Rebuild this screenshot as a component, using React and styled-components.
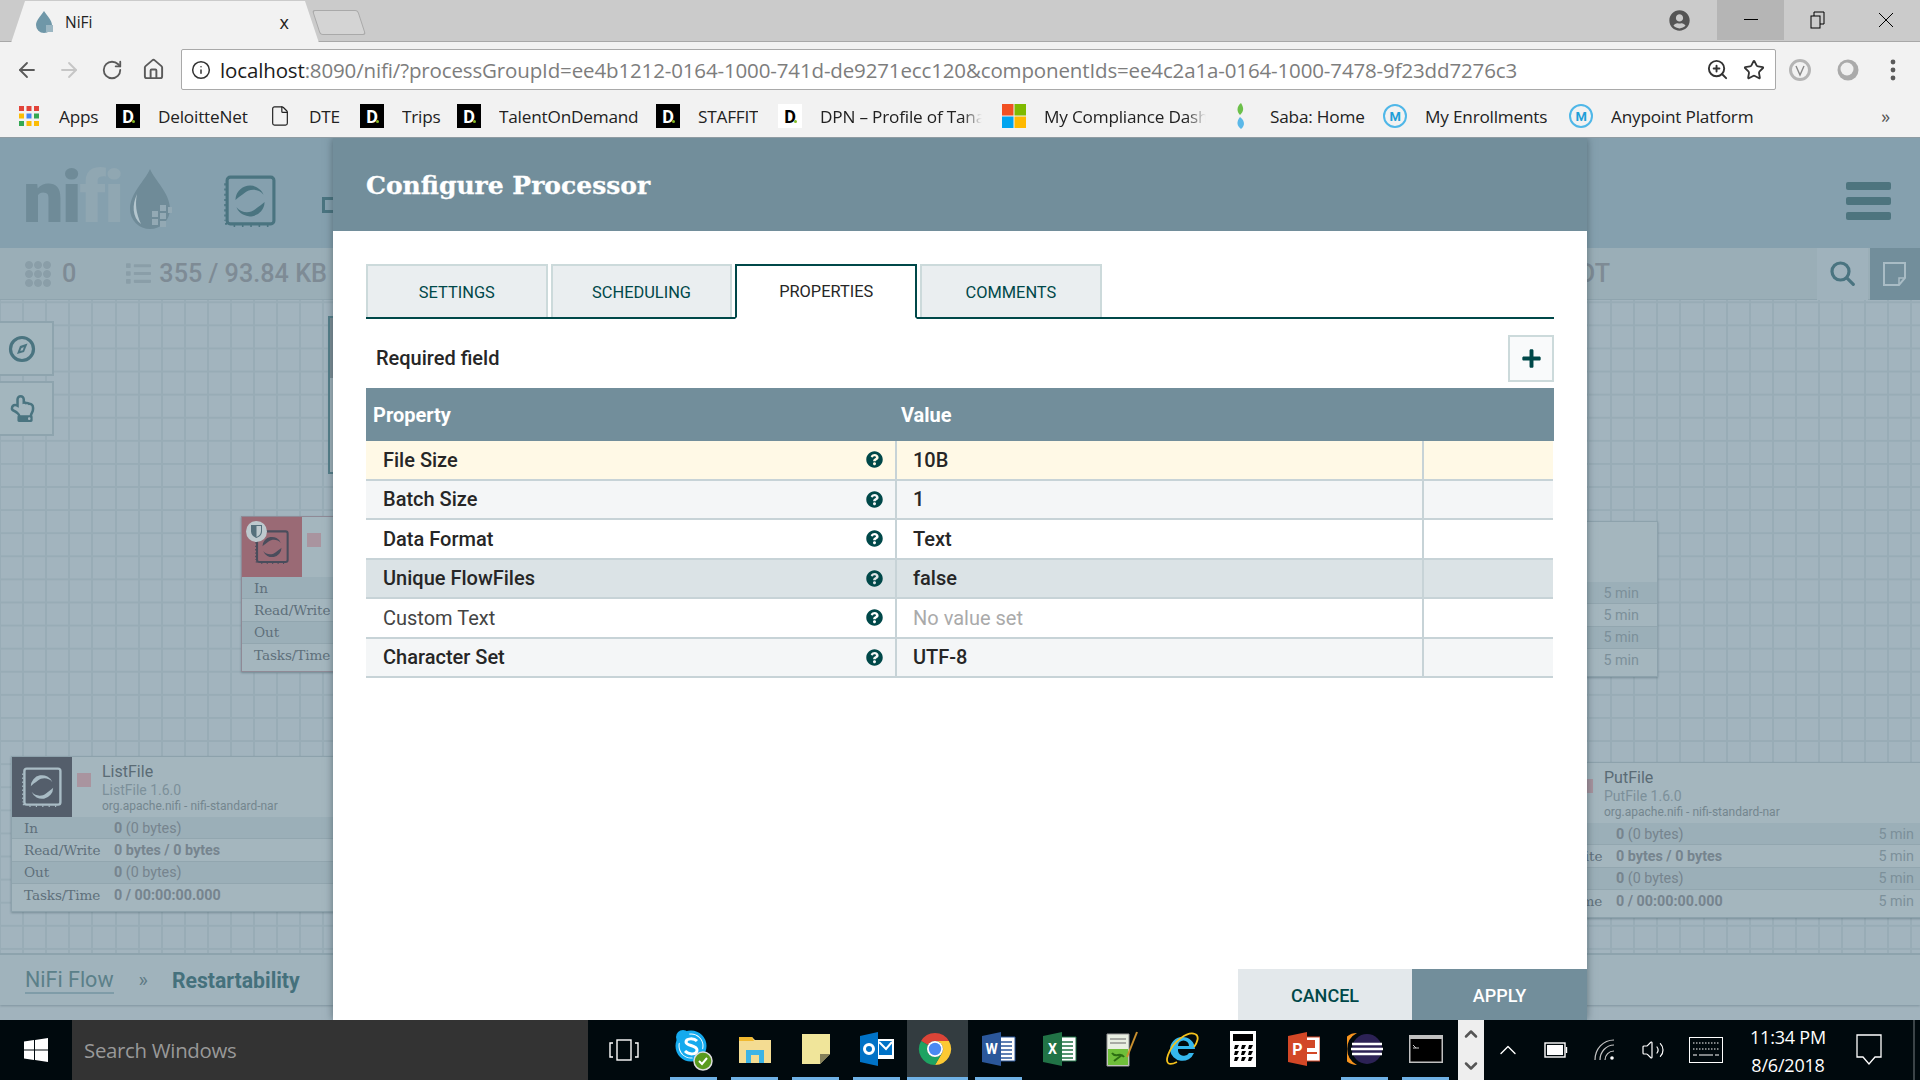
import React from 'react';
import styled, { createGlobalStyle } from 'styled-components';
import { ArrowLeft, ArrowRight, RotateCw, Home, Info, ZoomIn, Star, File, ChevronUp, ChevronDown, Volume2 } from 'lucide-react';
import { FaPlus, FaQuestionCircle, FaUserCircle, FaList, FaRegHandPointUp } from 'react-icons/fa';

const Global = createGlobalStyle`
  html, body { margin: 0; padding: 0; overflow: hidden; background: #000; }
  * { box-sizing: border-box; }
`;

const TEAL = '#004849';
const SLATE = '#728e9b';
const UI = '"Open Sans", "Noto Sans", sans-serif';
const ROBOTO = 'Roboto, "Liberation Sans", sans-serif';
const SLAB = '"DejaVu Serif", "Liberation Serif", serif';

const Screen = styled.div`
  width: 1920px;
  height: 1080px;
  display: flex;
  flex-direction: column;
  overflow: hidden;
  font-family: ${UI};
`;

/* browser chrome */
const TabStrip = styled.div`
  height: 42px;
  background: #cbcbcb;
  border-bottom: 1px solid #a8a8a8;
  display: flex;
  position: relative;
  flex: none;
`;
const BrowserTab = styled.div`
  width: 308px;
  height: 42px;
  margin: 1px 0 0 11px;
  background: #f2f2f2;
  clip-path: polygon(0 100%, 14px 0, 294px 0, 100% 100%);
  display: flex;
  align-items: center;
  padding-left: 24px;
  gap: 10px;
  font-size: 15.5px;
  color: #222;
`;
const TabTitle = styled.span`
  flex: 1;
`;
const TabClose = styled.span`
  font-size: 18px;
  margin-right: 30px;
  color: #222;
`;
const NewTab = styled.div`
  width: 46px;
  height: 25px;
  margin: 10px 0 0 -3px;
  background: #d4d4d4;
  border: 1px solid #a9a9a9;
  border-radius: 3px;
  transform: skewX(18deg);
`;
const WindowControls = styled.div`
  margin-left: auto;
  display: flex;
  align-items: center;
  height: 40px;
  color: #555;
`;
const Profile = styled.div`
  width: 35px;
  margin-right: 13px;
  display: flex;
`;
const WinBtn = styled.div`
  width: ${p => p.$w}px;
  height: 40px;
  display: flex;
  align-items: center;
  justify-content: center;
  background: ${p => (p.$hot ? '#b5b5b5' : 'transparent')};
`;
const Toolbar = styled.div`
  height: 53px;
  flex: none;
  background: #f2f2f2;
  display: flex;
  align-items: center;
  padding-top: 2px;
  color: #5a5a5a;
`;
const NavSlot = styled.div`
  width: ${p => p.$w}px;
  flex: none;
  display: flex;
  justify-content: center;
  color: ${p => p.$color || '#5a5a5a'};
`;
const Omnibox = styled.div`
  width: 1595px;
  height: 41px;
  margin-left: 15px;
  flex: none;
  background: #fff;
  border: 1px solid #a9a9a9;
  border-radius: 2px;
  display: flex;
  align-items: center;
  padding: 0 10px 0 9px;
  gap: 9px;
`;
const Url = styled.div`
  flex: 1;
  font-size: 20.5px;
  letter-spacing: -0.14px;
  color: #7d7d7d;
  white-space: nowrap;
  overflow: hidden;
  b { font-weight: 400; color: #1c1c1c; }
`;
const OmniAction = styled.span`
  display: flex;
  margin-right: ${p => p.$mr || 0}px;
  color: #333;
`;
const Bookmarks = styled.div`
  height: 43px;
  flex: none;
  background: #f2f2f2;
  border-bottom: 1px solid #8f9ca3;
  display: flex;
  align-items: center;
  padding-left: 17px;
  font-size: 17.2px;
  letter-spacing: -0.2px;
  color: #222;
`;
const Bookmark = styled.div`
  width: ${p => p.$w}px;
  display: flex;
  align-items: center;
  gap: 18px;
  flex: none;
`;
const BookmarkLabel = styled.span`
  white-space: nowrap;
  overflow: hidden;
  ${p => p.$clip && `
    width: ${p.$clip}px;
    -webkit-mask-image: linear-gradient(to right, #000 88%, transparent);
    mask-image: linear-gradient(to right, #000 88%, transparent);
  `}
`;
const More = styled.span`
  margin-left: auto;
  margin-right: 30px;
  font-size: 18px;
  color: #555;
`;
const DBadge = styled.span`
  width: 24px;
  height: 24px;
  flex: none;
  background: ${p => (p.$light ? '#fff' : '#000')};
  color: ${p => (p.$light ? '#000' : '#fff')};
  font: 700 18px ${ROBOTO};
  display: flex;
  align-items: center;
  justify-content: center;
  position: relative;
  &::after {
    content: '';
    position: absolute;
    width: 3px;
    height: 3px;
    right: 5px;
    bottom: 5px;
    border-radius: 50%;
    background: #86bc25;
  }
`;
const MuleBadge = styled.span`
  width: 24px;
  height: 24px;
  flex: none;
  border-radius: 50%;
  border: 2px solid #4fb7e8;
  color: #1f9fd8;
  font: 700 13px ${ROBOTO};
  display: flex;
  align-items: center;
  justify-content: center;
`;

/* nifi page behind the dialog */
const Page = styled.div`
  flex: 1;
  position: relative;
  display: flex;
  flex-direction: column;
  background: #a1b3bd;
  font-family: ${ROBOTO};
  overflow: hidden;
`;
const TopBar = styled.div`
  height: 110px;
  flex: none;
  background: #85a0ae;
  display: flex;
  align-items: flex-start;
  padding-left: 23px;
`;
const Logo = styled.div`
  display: flex;
  align-items: flex-start;
  margin-top: 31px;
`;
const LogoWord = styled.div`
  font: 900 72px/58px ${ROBOTO};
  letter-spacing: -1.8px;
  color: #6f8b98;
  span { color: #90a7b2; }
`;
const LogoDrop = styled.svg`
  width: 42px;
  height: 62px;
  margin: 0 0 0 8px;
`;
const ToolIcon = styled.div`
  margin: ${p => p.$m};
  display: flex;
`;
const Hamburger = styled.div`
  margin: 44px 29px 0 auto;
  width: 45px;
  display: flex;
  flex-direction: column;
  gap: 7px;
`;
const HamburgerBar = styled.span`
  height: 8px;
  border-radius: 2px;
  background: #4d747e;
`;
const StatsBar = styled.div`
  height: 52px;
  flex: none;
  background: #9aaeb7;
  border-bottom: 1px solid #8fa4ae;
  display: flex;
  align-items: center;
  padding-left: 25px;
  color: #7e8b95;
  font-weight: 500;
  font-size: 25.2px;
`;
const Stat = styled.span`
  margin-left: ${p => p.$ml || 0}px;
  margin-right: ${p => p.$mr || 0}px;
  display: flex;
`;
const StatsSpacer = styled.span`
  flex: 1;
`;
const StatsButton = styled.div`
  width: ${p => p.$w}px;
  height: 52px;
  margin-left: 2px;
  background: ${p => (p.$dark ? SLATE : '#9fb2bc')};
  display: flex;
  align-items: center;
  justify-content: center;
`;
const Canvas = styled.div`
  flex: 1;
  position: relative;
  --line: #98acb6;
  background-color: #a2b4be;
  background-image:
    repeating-linear-gradient(90deg, var(--line) 0 1px, transparent 1px 22.1px, var(--line) 22.1px 23.1px),
    repeating-linear-gradient(90deg, var(--line) 0 1px, transparent 1px 22.1px, var(--line) 22.1px 23.1px),
    linear-gradient(180deg, var(--line) 0 2px, transparent 2px);
  background-size: 333px 100%, 333px 100%, 100% 23.1px;
  background-position: 0 0, 1587.6px 0, 0 1.3px;
  background-repeat: no-repeat, no-repeat, repeat-y;
`;
const SideButton = styled.div`
  position: absolute;
  left: 0;
  top: ${p => p.$top}px;
  width: 54px;
  height: 55px;
  padding-right: 8px;
  background: #a3b6be;
  border: 2px solid #8ea4ae;
  border-left: 0;
  display: flex;
  align-items: center;
  justify-content: center;
  color: #4a7480;
`;
const GroupEdge = styled.div`
  position: absolute;
  left: 328px;
  top: 16px;
  width: 20px;
  height: 158px;
  border: 2px solid #55808b;
  background: linear-gradient(#7f8f98 0 60px, #a5b6be 60px);
`;
const Processor = styled.div`
  position: absolute;
  left: ${p => p.$x}px;
  top: ${p => p.$y}px;
  width: 420px;
  height: 156px;
  background: #a4b6be;
  border: 1px solid ${p => p.$edge || '#8da2ac'};
  box-shadow: 0 1px 2px rgba(70, 95, 105, 0.45);
  padding-bottom: 6px;
`;
const ProcHead = styled.div`
  height: 60px;
  display: flex;
`;
const ProcIcon = styled.div`
  width: 60px;
  height: 60px;
  flex: none;
  position: relative;
  background: ${p => p.$bg};
  display: flex;
  align-items: center;
  justify-content: center;
`;
const Shield = styled.span`
  position: absolute;
  left: 4px;
  top: 4px;
  width: 21px;
  height: 21px;
  border-radius: 50%;
  background: #bdc9ce;
  display: flex;
  align-items: center;
  justify-content: center;
`;
const StopSquare = styled.span`
  width: 14px;
  height: 14px;
  flex: none;
  margin: 16px 11px 0 5px;
  background: #a9949f;
`;
const ProcNames = styled.div`
  padding-top: 5px;
  white-space: nowrap;
`;
const ProcTitle = styled.div`
  font-size: 16px;
  line-height: 19px;
  color: #5a6b75;
`;
const ProcType = styled.div`
  font-size: 14px;
  line-height: 18px;
  color: #7c909a;
`;
const ProcBundle = styled.div`
  font-size: 12px;
  line-height: 15px;
  color: #74868f;
`;
const StatRow = styled.div`
  height: 22.4px;
  display: flex;
  align-items: center;
  padding: 0 18px 0 12px;
  background: ${p => (p.$odd ? '#9bafb8' : '#a4b6be')};
  border-bottom: 1px solid #92a6af;
  &:last-child { border-bottom: 0; }
`;
const StatLabel = styled.span`
  width: 90px;
  font: 13.6px ${SLAB};
  letter-spacing: -0.1px;
  color: #5f707b;
  white-space: nowrap;
`;
const StatValue = styled.span`
  flex: 1;
  font-size: 14.3px;
  color: #76848e;
  white-space: nowrap;
  b { font-weight: 700; }
`;
const StatAge = styled.span`
  font-size: 14.3px;
  color: #7c909a;
`;
const Breadcrumbs = styled.div`
  height: 52px;
  flex: none;
  margin-bottom: 15px;
  background: #a0b3bc;
  border-top: 2px solid #8da3ad;
  box-shadow: 0 1px 2px rgba(80, 105, 115, 0.4);
  display: flex;
  align-items: center;
  padding-left: 25px;
  font-size: 21.5px;
  color: #5b8089;
`;
const Crumb = styled.span`
  border-bottom: 2px solid #7f9ca8;
  line-height: 25px;
`;
const CrumbSep = styled.span`
  margin: 0 24px 0 25px;
  font-size: 20px;
  color: #5f7b85;
`;
const CrumbCurrent = styled.span`
  font-weight: 700;
  font-size: 21.2px;
  color: #45717c;
`;

/* dialog */
const Modal = styled.div`
  position: absolute;
  top: 0;
  bottom: 0;
  left: 333px;
  width: 1254px;
  background: #fff;
  box-shadow: 0 0 8px rgba(40, 60, 70, 0.55);
  display: flex;
  flex-direction: column;
`;
const ModalHeader = styled.div`
  height: 93px;
  flex: none;
  background: ${SLATE};
  padding: 25px 0 0 33px;
  font: 700 25px/46px ${SLAB};
  -webkit-text-stroke: 0.3px #fff;
  color: #fff;
`;
const ModalBody = styled.div`
  flex: 1;
  padding: 33px 33px 0;
`;
const Tabs = styled.div`
  height: 55px;
  display: flex;
  align-items: flex-start;
  gap: 3px;
  border-bottom: 2px solid ${TEAL};
`;
const Tab = styled.div`
  width: 181.7px;
  height: ${p => (p.$active ? 55 : 53)}px;
  padding-top: ${p => (p.$active ? 0 : 2)}px;
  border: 2px solid ${p => (p.$active ? TEAL : '#ccdadb')};
  border-bottom: ${p => (p.$active ? '2px solid #fff' : 0)};
  background: ${p => (p.$active ? '#fff' : '#eaeef0')};
  color: ${p => (p.$active ? '#262626' : TEAL)};
  font-size: 16.4px;
  font-weight: 400;
  display: flex;
  align-items: center;
  justify-content: center;
`;
const RequiredRow = styled.div`
  height: 69px;
  display: flex;
  align-items: flex-start;
  justify-content: space-between;
  padding: 16px 0 0 10px;
`;
const RequiredLabel = styled.span`
  font-size: 20px;
  font-weight: 500;
  line-height: 47px;
  color: #262626;
`;
const AddButton = styled.div`
  width: 46px;
  height: 47px;
  background: #f9fafb;
  border: 2px solid #ccdadb;
  display: flex;
  align-items: center;
  justify-content: center;
  color: ${TEAL};
`;
const HeadRow = styled.div`
  height: 53px;
  background: ${SLATE};
  display: grid;
  grid-template-columns: 528px 1fr;
  align-items: center;
  padding-left: 7px;
  color: #fff;
  font-size: 20px;
  font-weight: 700;
`;
const PropRow = styled.div`
  height: 39.5px;
  width: 1187px;
  display: grid;
  grid-template-columns: 531px 527px 1fr;
  background: ${p => p.$bg};
  border-bottom: 2px solid #c7d3d7;
`;
const PropName = styled.div`
  display: flex;
  align-items: center;
  justify-content: space-between;
  padding: 0 12px 0 17px;
  border-right: 2px solid #c7d3d7;
  font-size: 20px;
  font-weight: ${p => (p.$optional ? 400 : 500)};
  color: ${p => (p.$optional ? '#444' : '#262626')};
  svg { color: ${TEAL}; }
`;
const PropValue = styled.div`
  display: flex;
  align-items: center;
  padding-left: 16px;
  border-right: 2px solid #c7d3d7;
  font-size: 20px;
  font-weight: ${p => (p.$empty ? 400 : 500)};
  color: ${p => (p.$empty ? '#aaa' : '#262626')};
`;
const ModalFooter = styled.div`
  height: 51px;
  flex: none;
  display: flex;
  justify-content: flex-end;
`;
const FooterButton = styled.div`
  width: ${p => p.$w}px;
  padding-top: 2px;
  display: flex;
  align-items: center;
  justify-content: center;
  font-size: 18px;
  font-weight: 500;
  background: ${p => (p.$primary ? SLATE : '#e3e8eb')};
  color: ${p => (p.$primary ? '#fff' : TEAL)};
`;

/* windows taskbar */
const Taskbar = styled.div`
  height: 60px;
  flex: none;
  background: #00090d;
  display: flex;
  color: #fff;
  & > * { flex: none; }
`;
const Start = styled.div`
  width: 72px;
  display: flex;
  align-items: center;
  justify-content: center;
`;
const SearchBox = styled.div`
  width: 516px;
  background: #333;
  color: #999;
  font-size: 20.4px;
  letter-spacing: -0.3px;
  display: flex;
  align-items: center;
  padding-left: 12px;
`;
const TaskView = styled.div`
  width: 75px;
  display: flex;
  align-items: center;
  justify-content: center;
  padding-right: 3px;
`;
const TaskApp = styled.div`
  width: ${p => (p.$active ? 61 : 47)}px;
  margin: 0 ${p => (p.$active ? 0 : 7)}px;
  padding-right: ${p => (p.$active ? 5 : 0)}px;
  display: flex;
  align-items: center;
  justify-content: center;
  background: ${p => (p.$active ? '#333c40' : 'transparent')};
  border-bottom: 3px solid ${p => (p.$open ? '#6fb1e5' : 'transparent')};
`;
const Scroller = styled.div`
  width: 26px;
  margin-left: 2px;
  background: #eee;
  color: #555;
  display: flex;
  flex-direction: column;
  align-items: center;
  justify-content: space-between;
  padding: 4px 0;
`;
const TraySlot = styled.div`
  width: ${p => p.$w}px;
  display: flex;
  align-items: center;
  justify-content: center;
`;
const Clock = styled.div`
  width: 104px;
  text-align: center;
  font-size: 18px;
  line-height: 28px;
  letter-spacing: -0.2px;
  padding-top: 3px;
`;
const EndLine = styled.div`
  width: 2px;
  margin-left: 15px;
  background: #3b4347;
`;

const ProcessorGlyph = ({ size = 50, color = '#4a7480' }) => (
  <svg width={size} height={size} viewBox="0 0 50 50">
    <rect x="3" y="2" width="45" height="45" rx="3" fill="none" stroke={color} strokeWidth="3" />
    <path d="M1 47h3M1 8v36M10 48v2M18 48v2M26 48v2M34 48v2M42 48v2" stroke={color} strokeWidth="1.5" strokeDasharray="2 3" fill="none" />
    <path d="M11 24A14 14 0 0 1 38 19C33 13 25 13 20 17 16 20 13 22 11 24Z" fill={color} />
    <path d="M39 26A14 14 0 0 1 12 31C17 37 25 37 30 33 34 30 37 28 39 26Z" fill={color} />
  </svg>
);

const GridDots = () => (
  <svg width="26" height="26" viewBox="0 0 26 26">
    {[4, 13, 22].map(y =>
      [4, 13, 22].map(x => (
        <circle key={`${x}-${y}`} cx={x} cy={y} r="3.5" fill={(x + y) % 9 === 8 ? '#8a9ea8' : '#a0b2bb'} stroke="#8a9ea8" />
      ))
    )}
  </svg>
);

const StickyNote = () => (
  <svg width="24" height="24" viewBox="0 0 24 24" fill="none" stroke="#a9bcc5" strokeWidth="2">
    <path d="M1 1h21v15l-6 7H1z" />
    <path d="M22 16h-6v7" strokeWidth="1.5" />
  </svg>
);

const SearchGlyph = () => (
  <svg width="25" height="25" viewBox="0 0 25 25" fill="none" stroke="#4a7480" strokeWidth="3.2">
    <circle cx="10.5" cy="10.5" r="8.5" />
    <path d="M16.8 16.8l6.5 6.5" strokeLinecap="round" />
  </svg>
);

const Compass = () => (
  <svg width="28" height="28" viewBox="0 0 28 28" fill="none">
    <circle cx="14" cy="14" r="11.5" stroke="#4a7480" strokeWidth="3.2" />
    <path d="M19.5 8.5L16 17l-7 2 3-8z" fill="#4a7480" />
    <path d="M15.8 12l-.9 3.2-2.6.8 1-2.8z" fill="#a3b6be" />
  </svg>
);

const AppsGrid = () => (
  <svg width="24" height="24" viewBox="0 0 24 24">
    {[
      ['#e2443a', 2, 2], ['#e2443a', 9.5, 2], ['#e2443a', 17, 2],
      ['#fbbc05', 2, 9.5], ['#4285f4', 9.5, 9.5], ['#34a853', 17, 9.5],
      ['#34a853', 2, 17], ['#fbbc05', 9.5, 17], ['#fbbc05', 17, 17],
    ].map(([fill, x, y]) => (
      <rect key={`${x}-${y}`} x={x} y={y} width="5" height="5" fill={fill} />
    ))}
  </svg>
);

const MsLogo = () => (
  <svg width="24" height="24" viewBox="0 0 24 24">
    <rect width="11.5" height="11.5" fill="#f25022" />
    <rect x="12.5" width="11.5" height="11.5" fill="#7fba00" />
    <rect y="12.5" width="11.5" height="11.5" fill="#00a4ef" />
    <rect x="12.5" y="12.5" width="11.5" height="11.5" fill="#ffb900" />
  </svg>
);

const SabaLeaf = () => (
  <svg width="24" height="26" viewBox="0 0 24 26">
    <path d="M13 0c3 5 3 8-1 12-3-3-4-8 1-12z" fill="#6cc04a" />
    <path d="M13 26c-4-3-5-7-1-12 4 3 6 8 1 12z" fill="#5bb8e8" />
  </svg>
);

const WinLogo = () => (
  <svg width="24" height="24" viewBox="0 0 24 24" fill="#fff">
    <path d="M0 3.5l10-1.4v9.3H0zM11 2l13-2v11.4H11zM0 12.5h10v9.4L0 20.5zM11 12.5h13V24l-13-2z" />
  </svg>
);

const TaskViewGlyph = () => (
  <svg width="30" height="22" viewBox="0 0 30 22" fill="none" stroke="#fff" strokeWidth="1.4">
    <rect x="8" y="1" width="14" height="20" />
    <path d="M4 4H1v14h3M26 4h3v14h-3" />
  </svg>
);

const Skype = () => (
  <svg width="40" height="44" viewBox="0 0 40 44">
    <circle cx="17" cy="19" r="14" fill="#fff" stroke="#15aaee" strokeWidth="3" />
    <circle cx="9" cy="10" r="7" fill="#15aaee" />
    <circle cx="25" cy="28" r="7" fill="#15aaee" />
    <circle cx="17" cy="19" r="11.5" fill="#15aaee" />
    <path d="M23 14c-3-3-11-3-11 1s11 3 11 8-8 5-12 1" fill="none" stroke="#fff" strokeWidth="3" />
    <circle cx="29" cy="34" r="9" fill="#5a9a1e" stroke="#ddd" strokeWidth="1.5" />
    <path d="M25 34l3 3 5-6" fill="none" stroke="#fff" strokeWidth="2" />
  </svg>
);

const Folder = () => (
  <svg width="34" height="30" viewBox="0 0 34 30">
    <path d="M1 3h13l3 3h16v23H1z" fill="#f4dc92" />
    <path d="M1 3h13l2 4H1z" fill="#f1b930" />
    <path d="M8 29V16h18v13h-5v-8h-8v8z" fill="#3cb4e6" />
  </svg>
);

const NoteGlyph = () => (
  <svg width="30" height="32" viewBox="0 0 30 32">
    <path d="M1 1h28v20L19 31H1z" fill="#f0e59a" />
    <path d="M29 21H19v10z" fill="#84805a" />
  </svg>
);

const Outlook = () => (
  <svg width="34" height="34" viewBox="0 0 34 34">
    <path d="M14 7h20v20H14z" fill="#fff" />
    <path d="M19 9h13v14H19z" fill="#0072c6" />
    <path d="M19 10l7 7 6-7" fill="none" stroke="#fff" strokeWidth="2" />
    <path d="M0 4l18-4v34L0 30z" fill="#0072c6" />
    <circle cx="9" cy="17" r="4.5" fill="none" stroke="#fff" strokeWidth="3" />
  </svg>
);

const Chrome = () => (
  <svg width="34" height="34" viewBox="0 0 34 34">
    <path d="M3.1 9A16 16 0 0 1 30.9 9H17a8 8 0 0 0-7 4z" fill="#db4437" />
    <path d="M30.9 9A16 16 0 0 1 17 33l7-12a8 8 0 0 0-7-12z" fill="#fcc934" />
    <path d="M3.1 9A16 16 0 0 0 17 33l7-12a8 8 0 0 1-14-8z" fill="#1ea362" />
    <circle cx="17" cy="17" r="8" fill="#fff" />
    <circle cx="17" cy="17" r="6.2" fill="#4a89f3" />
  </svg>
);

const OfficeDoc = ({ fill, letter }) => (
  <svg width="34" height="34" viewBox="0 0 34 34">
    <path d="M14 5h19v24H14z" fill="#fff" stroke={fill} />
    <path d="M18 10h12M18 14h12M18 18h12M18 22h12M18 26h12" stroke={fill} strokeWidth="1.6" />
    <path d="M0 4l19-4v34L0 30z" fill={fill} />
    <text x="9.5" y="22" textAnchor="middle" fontFamily="Roboto, sans-serif" fontWeight="700" fontSize="14" fill="#fff">{letter}</text>
  </svg>
);

const NotepadGlyph = () => (
  <svg width="34" height="36" viewBox="0 0 34 36">
    <path d="M3 3h22v32H3z" fill="#e8efe2" stroke="#999" />
    <path d="M6 8h16M6 12h16" stroke="#666" />
    <path d="M4 18h20v16H4z" fill="#6fbf3a" />
    <path d="M8 22c4 6 8-2 12 4M10 30l8-6" stroke="#2d6e12" strokeWidth="2" fill="none" />
    <path d="M33 1L23 26" stroke="#c9902e" strokeWidth="2" />
  </svg>
);

const IEGlyph = () => (
  <svg width="36" height="36" viewBox="0 0 36 36">
    <path d="M6 19a12.5 12.5 0 0 1 25-1H14a6 6 0 0 0 11 4h5a12.5 12.5 0 0 1-24-3zm8-4h11a5.5 5.5 0 0 0-11 0z" fill="#35b8ee" />
    <path d="M31 3C24 0 9 10 4 24c-3 9 1 11 9 7M31 3c5 2 2 9-1 13" fill="none" stroke="#f5c21c" strokeWidth="1.8" />
  </svg>
);

const Calc = () => (
  <svg width="26" height="36" viewBox="0 0 26 36">
    <path d="M0 0h26v36H0z" fill="#fff" />
    <path d="M3 3h20v7H3z" fill="#000" />
    {[14, 20, 26].map(y =>
      [3, 10, 17].map(x => <path key={`${x}-${y}`} d={`M${x + 2} ${y}h4l-2 4h-3z`} fill="#000" />)
    )}
  </svg>
);

const Ppt = () => (
  <svg width="32" height="34" viewBox="0 0 32 34">
    <path d="M14 5h18v24H14z" fill="#fff" stroke="#d24726" />
    <path d="M19 8h8v8h-8zM19 20h10v2H19z" fill="#d24726" />
    <path d="M0 4l19-4v34L0 30z" fill="#d24726" />
    <text x="9.5" y="23" textAnchor="middle" fontFamily="Roboto, sans-serif" fontWeight="700" fontSize="16" fill="#fff">P</text>
  </svg>
);

const Eclipse = () => (
  <svg width="36" height="34" viewBox="0 0 36 34">
    <path d="M10 1A16 16 0 0 0 10 33 18 18 0 0 1 10 1z" fill="#f7941e" />
    <circle cx="20" cy="17" r="15" fill="#2c2255" />
    <path d="M5 12h30M4 17h32M5 22h30" stroke="#fff" strokeWidth="2.4" />
  </svg>
);

const Cmd = () => (
  <svg width="34" height="28" viewBox="0 0 34 28">
    <path d="M0 0h34v28H0z" fill="#c0c0c0" />
    <path d="M1.5 4h31v22.5h-31z" fill="#000" />
    <path d="M4 10l3 3M4 13h6" stroke="#ccc" strokeWidth="1" />
  </svg>
);

const Battery = () => (
  <svg width="24" height="16" viewBox="0 0 24 16" fill="none" stroke="#fff" strokeWidth="1.4">
    <rect x="1" y="1" width="20" height="14" />
    <rect x="3" y="3" width="16" height="10" fill="#fff" stroke="none" />
    <path d="M22.5 5v6" />
  </svg>
);

const Wifi = () => (
  <svg width="22" height="24" viewBox="0 0 22 24" fill="none" stroke="#c5c5c5" strokeWidth="1.2">
    <path d="M1 22C1 11 9 2 20 2M6 22C6 14 12 7 20 7M11 22c0-5 4-9 9-9" />
    <circle cx="18" cy="20" r="1.8" fill="#fff" stroke="none" />
  </svg>
);

const Keyboard = () => (
  <svg width="34" height="26" viewBox="0 0 34 26" fill="none" stroke="#fff">
    <rect x="0.5" y="0.5" width="33" height="25" />
    <path d="M4 6h26M4 12h26" strokeDasharray="1.5 1.5" />
    <path d="M4 18h4M10 18h14M26 18h4" />
  </svg>
);

const Bubble = () => (
  <svg width="26" height="32" viewBox="0 0 26 32" fill="none" stroke="#fff" strokeWidth="1.3">
    <path d="M1 1h24v22h-6l-6 7-6-7H1z" />
  </svg>
);

const rowLabels = ['In', 'Read/Write', 'Out', 'Tasks/Time'];
const rowValues = [
  <><b>0</b> (0 bytes)</>,
  <b>0 bytes / 0 bytes</b>,
  <><b>0</b> (0 bytes)</>,
  <b>0 / 00:00:00.000</b>,
];

const ProcessorBox = ({ x, y, iconBg = '#545e6b', edge, glyph, shield, name, version, labels, values, ages }) => (
  <Processor $x={x} $y={y} $edge={edge}>
    <ProcHead>
      <ProcIcon $bg={iconBg}>
        {glyph}
        {shield && (
          <Shield>
            <svg width="11" height="13" viewBox="0 0 11 13">
              <path d="M0 0h11v6c0 4-3 6-5.5 7C3 12 0 10 0 6z" fill="#55707c" />
              <path d="M5.5 1H10v5c0 3-2 5-4.5 6z" fill="#bdc9ce" />
            </svg>
          </Shield>
        )}
      </ProcIcon>
      <StopSquare />
      {name && (
        <ProcNames>
          <ProcTitle>{name}</ProcTitle>
          <ProcType>{version}</ProcType>
          <ProcBundle>org.apache.nifi - nifi-standard-nar</ProcBundle>
        </ProcNames>
      )}
    </ProcHead>
    {rowLabels.map((label, i) => (
      <StatRow key={label} $odd={i % 2 === 0}>
        <StatLabel>{labels ? label : ''}</StatLabel>
        <StatValue>{values ? rowValues[i] : ''}</StatValue>
        {ages && <StatAge>5 min</StatAge>}
      </StatRow>
    ))}
  </Processor>
);

const properties = [
  { name: 'File Size', value: '10B', bg: '#fff9e6' },
  { name: 'Batch Size', value: '1', bg: '#f4f6f7' },
  { name: 'Data Format', value: 'Text', bg: '#fff' },
  { name: 'Unique FlowFiles', value: 'false', bg: '#dbe3e6' },
  { name: 'Custom Text', value: 'No value set', bg: '#fff', optional: true },
  { name: 'Character Set', value: 'UTF-8', bg: '#f4f6f7' },
];

const bookmarks = [
  { w: 99, icon: <AppsGrid />, label: 'Apps' },
  { w: 153, icon: <DBadge>D</DBadge>, label: 'DeloitteNet' },
  { w: 91, icon: <File size={22} strokeWidth={1.3} />, label: 'DTE' },
  { w: 97, icon: <DBadge>D</DBadge>, label: 'Trips' },
  { w: 199, icon: <DBadge>D</DBadge>, label: 'TalentOnDemand' },
  { w: 122, icon: <DBadge>D</DBadge>, label: 'STAFFIT' },
  { w: 224, icon: <DBadge $light>D</DBadge>, label: 'DPN – Profile of Tana', clip: 162 },
  { w: 226, icon: <MsLogo />, label: 'My Compliance Dash', clip: 162 },
  { w: 155, icon: <SabaLeaf />, label: 'Saba: Home' },
  { w: 186, icon: <MuleBadge>M</MuleBadge>, label: 'My Enrollments' },
  { w: 200, icon: <MuleBadge>M</MuleBadge>, label: 'Anypoint Platform' },
];

const taskApps = [
  { key: 'skype', icon: <Skype />, open: true },
  { key: 'folder', icon: <Folder />, open: true },
  { key: 'note', icon: <NoteGlyph />, open: true },
  { key: 'outlook', icon: <Outlook />, open: true },
  { key: 'chrome', icon: <Chrome />, open: true, active: true },
  { key: 'word', icon: <OfficeDoc fill="#2b579a" letter="W" />, open: true },
  { key: 'excel', icon: <OfficeDoc fill="#217346" letter="X" /> },
  { key: 'notepad', icon: <NotepadGlyph /> },
  { key: 'ie', icon: <IEGlyph /> },
  { key: 'calc', icon: <Calc /> },
  { key: 'ppt', icon: <Ppt /> },
  { key: 'eclipse', icon: <Eclipse />, open: true },
  { key: 'cmd', icon: <Cmd />, open: true },
];

export default function App() {
  return (
    <Screen>
      <Global />
      <TabStrip>
        <BrowserTab>
          <svg width="20" height="24" viewBox="0 0 20 24">
            <path d="M9 1c3 5 8 9 8 14a8 8 0 0 1-16 0C1 10 6 6 9 1z" fill="#6f97a8" />
            <path d="M11 15h7v7h-7z" fill="#9bb6c2" />
          </svg>
          <TabTitle>NiFi</TabTitle>
          <TabClose>x</TabClose>
        </BrowserTab>
        <NewTab />
        <WindowControls>
          <Profile><FaUserCircle size={21} /></Profile>
          <WinBtn $w={67} $hot>
            <svg width="14" height="2"><rect width="14" height="1" fill="#000" /></svg>
          </WinBtn>
          <WinBtn $w={68}>
            <svg width="16" height="18" viewBox="0 0 16 18" fill="none" stroke="#000">
              <rect x="1" y="5" width="9" height="12" />
              <path d="M4 5V1h10v12h-4" />
            </svg>
          </WinBtn>
          <WinBtn $w={68}>
            <svg width="16" height="16" viewBox="0 0 16 16" stroke="#000"><path d="M1 1l14 14M15 1L1 15" /></svg>
          </WinBtn>
        </WindowControls>
      </TabStrip>
      <Toolbar>
        <NavSlot $w={54}><ArrowLeft size={24} strokeWidth={1.8} /></NavSlot>
        <NavSlot $w={29} $color="#c6c6c6"><ArrowRight size={24} strokeWidth={1.8} /></NavSlot>
        <NavSlot $w={57}><RotateCw size={22} strokeWidth={2} /></NavSlot>
        <NavSlot $w={26}><Home size={23} strokeWidth={2} /></NavSlot>
        <Omnibox>
          <Info size={20} strokeWidth={1.8} color="#333" />
          <Url><b>localhost</b>:8090/nifi/?processGroupId=ee4b1212-0164-1000-741d-de9271ecc120&amp;componentIds=ee4c2a1a-0164-1000-7478-9f23dd7276c3</Url>
          <OmniAction $mr={5}><ZoomIn size={23} /></OmniAction>
          <OmniAction><Star size={22} strokeWidth={2} /></OmniAction>
        </Omnibox>
        <NavSlot $w={48} $color="#bbb">
          <svg width="24" height="24" viewBox="0 0 24 24" fill="none" stroke="#b5b5b5" strokeWidth="3">
            <circle cx="12" cy="12" r="9.5" />
            <path d="M8 8l4 9 4-9" strokeWidth="1.4" stroke="#888" />
          </svg>
        </NavSlot>
        <NavSlot $w={48}>
          <svg width="24" height="24" viewBox="0 0 24 24">
            <circle cx="12" cy="12" r="10.5" fill="#aaa" />
            <circle cx="11" cy="11" r="6.5" fill="#efefef" />
          </svg>
        </NavSlot>
        <NavSlot $w={42}>
          <svg width="6" height="24" viewBox="0 0 6 24" fill="#5a5a5a">
            <circle cx="3" cy="4" r="2.4" /><circle cx="3" cy="12" r="2.4" /><circle cx="3" cy="20" r="2.4" />
          </svg>
        </NavSlot>
      </Toolbar>
      <Bookmarks>
        {bookmarks.map(b => (
          <Bookmark key={b.label} $w={b.w}>
            {b.icon}
            <BookmarkLabel $clip={b.clip}>{b.label}</BookmarkLabel>
          </Bookmark>
        ))}
        <More>»</More>
      </Bookmarks>

      <Page>
        <TopBar>
          <Logo>
            <LogoWord>ni<span>fi</span></LogoWord>
            <LogoDrop viewBox="0 0 42 62">
              <path d="M20 0c5 12 20 24 20 40a20 20 0 0 1-40 0C0 24 15 12 20 0z" fill="#6f8b98" />
              <path d="M7 25C2 36 2 48 11 55 6 44 5 35 7 25z" fill="#b4c6ce" />
              <path d="M22 42h6v6h-6zM30 36h6v6h-6zM30 44h6v6h-6zM22 50h6v6h-6zM30 52h6v6h-6zM38 38h4v6h-4z" fill="#93a9b4" />
            </LogoDrop>
          </Logo>
          <ToolIcon $m="37px 0 0 52px">
            <ProcessorGlyph size={52} />
          </ToolIcon>
          <ToolIcon $m="59px 0 0 46px">
            <svg width="14" height="16"><rect x="1.5" y="1.5" width="14" height="13" fill="none" stroke="#4a7480" strokeWidth="3" /></svg>
          </ToolIcon>
          <Hamburger>
            <HamburgerBar /><HamburgerBar /><HamburgerBar />
          </Hamburger>
        </TopBar>
        <StatsBar>
          <GridDots />
          <Stat $ml={11}>0</Stat>
          <Stat $ml={50}><FaList size={25} color="#8a9ea8" /></Stat>
          <Stat $ml={8}>355 / 93.84 KB</Stat>
          <StatsSpacer />
          <Stat $mr={205}>DT</Stat>
          <StatsButton $w={51}><SearchGlyph /></StatsButton>
          <StatsButton $w={50} $dark><StickyNote /></StatsButton>
        </StatsBar>
        <Canvas>
          <SideButton $top={21}><Compass /></SideButton>
          <SideButton $top={81}><FaRegHandPointUp size={27} /></SideButton>
          <GroupEdge />
          <ProcessorBox x={241} y={216} iconBg="#9a6a75" edge="#8f8a96" glyph={<ProcessorGlyph size={34} color="#4a4d5c" />} shield labels />
          <ProcessorBox x={1238} y={221} ages />
          <ProcessorBox x={11} y={456} glyph={<ProcessorGlyph size={40} color="#a9bcc5" />} name="ListFile" version="ListFile 1.6.0" labels values />
          <ProcessorBox x={1513} y={462} name="PutFile" version="PutFile 1.6.0" labels values ages />
        </Canvas>
        <Breadcrumbs>
          <Crumb>NiFi Flow</Crumb>
          <CrumbSep>»</CrumbSep>
          <CrumbCurrent>Restartability</CrumbCurrent>
        </Breadcrumbs>

        <Modal>
          <ModalHeader>Configure Processor</ModalHeader>
          <ModalBody>
            <Tabs>
              <Tab>SETTINGS</Tab>
              <Tab>SCHEDULING</Tab>
              <Tab $active>PROPERTIES</Tab>
              <Tab>COMMENTS</Tab>
            </Tabs>
            <RequiredRow>
              <RequiredLabel>Required field</RequiredLabel>
              <AddButton><FaPlus size={21} /></AddButton>
            </RequiredRow>
            <HeadRow>
              <span>Property</span>
              <span>Value</span>
            </HeadRow>
            {properties.map(p => (
              <PropRow key={p.name} $bg={p.bg}>
                <PropName $optional={p.optional}>
                  {p.name}
                  <FaQuestionCircle size={17} />
                </PropName>
                <PropValue $empty={p.optional}>{p.value}</PropValue>
                <span />
              </PropRow>
            ))}
          </ModalBody>
          <ModalFooter>
            <FooterButton $w={174}>CANCEL</FooterButton>
            <FooterButton $w={175} $primary>APPLY</FooterButton>
          </ModalFooter>
        </Modal>
      </Page>

      <Taskbar>
        <Start><WinLogo /></Start>
        <SearchBox>Search Windows</SearchBox>
        <TaskView><TaskViewGlyph /></TaskView>
        {taskApps.map(app => (
          <TaskApp key={app.key} $open={app.open} $active={app.active}>{app.icon}</TaskApp>
        ))}
        <Scroller>
          <ChevronUp size={20} strokeWidth={3} />
          <ChevronDown size={20} strokeWidth={3} />
        </Scroller>
        <TraySlot $w={48}><ChevronUp size={28} strokeWidth={1.2} /></TraySlot>
        <TraySlot $w={48}><Battery /></TraySlot>
        <TraySlot $w={49}><Wifi /></TraySlot>
        <TraySlot $w={47}><Volume2 size={24} strokeWidth={1.2} /></TraySlot>
        <TraySlot $w={60}><Keyboard /></TraySlot>
        <Clock>11:34 PM<br />8/6/2018</Clock>
        <TraySlot $w={58}><Bubble /></TraySlot>
        <EndLine />
      </Taskbar>
    </Screen>
  );
}
